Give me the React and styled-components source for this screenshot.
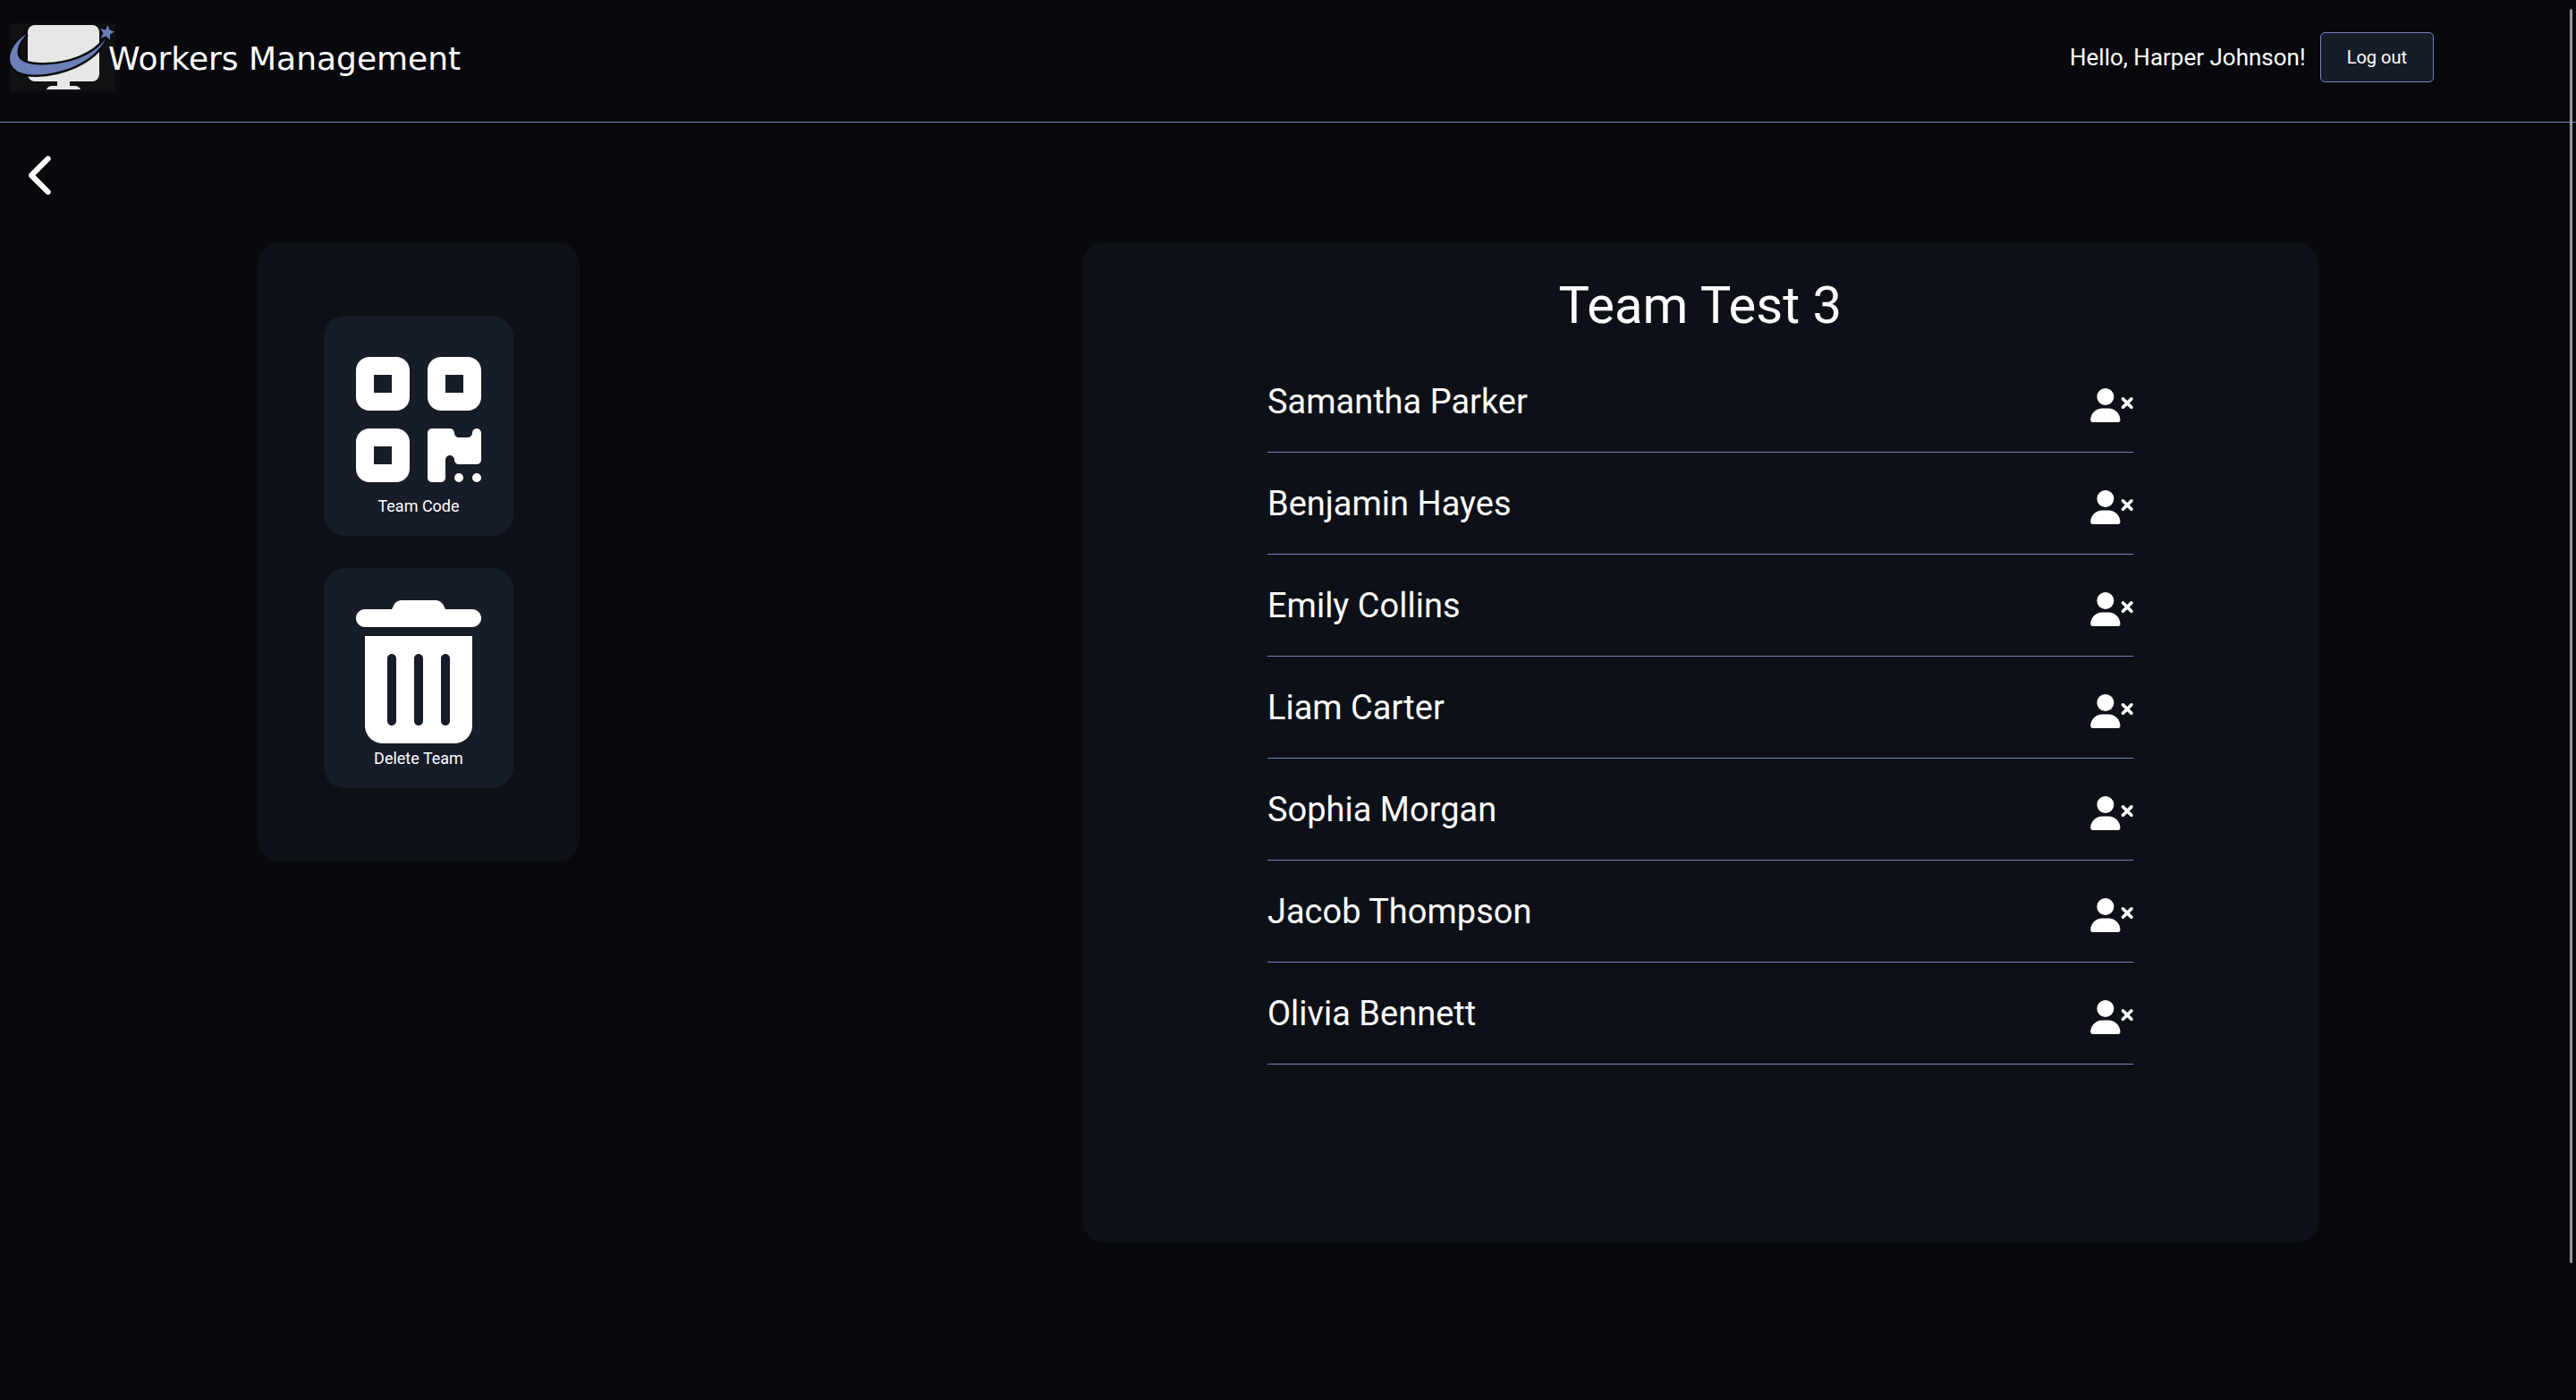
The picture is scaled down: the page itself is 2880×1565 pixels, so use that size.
import React from 'react';
import styled, { createGlobalStyle } from 'styled-components';
import { FaChevronLeft, FaQrcode, FaTrashCan, FaUserXmark } from 'react-icons/fa6';

const colors = {
  page: '#07090d',
  card: '#0d1117',
  tile: '#171c29',
  line: '#7583bd',
  text: '#ffffff',
};

const GlobalStyle = createGlobalStyle`
  * { box-sizing: border-box; }
  body {
    margin: 0;
    min-height: 100vh;
    background: ${colors.page};
    color: ${colors.text};
    font-family: Roboto, "Liberation Sans", sans-serif;
  }
  button { font: inherit; color: inherit; border: 0; background: none; padding: 0; cursor: pointer; }
`;

const Header = styled.header`
  display: flex;
  align-items: center;
  justify-content: space-between;
  height: 137px;
  padding: 0 159px 9px 11px;
  border-bottom: 1px solid ${colors.line};
`;

const Brand = styled.a`
  display: flex;
  align-items: center;
  color: inherit;
  text-decoration: none;
`;

const Logo = styled.svg`
  width: 118px;
  height: 76px;
  margin-right: -8px;
`;

const BrandName = styled.span`
  font-family: "DejaVu Sans", Verdana, sans-serif;
  font-size: 36px;
  line-height: 44px;
  padding-top: 4px;
`;

const Session = styled.div`
  display: flex;
  align-items: center;
  gap: 16px;
`;

const Greeting = styled.span`
  font-size: 26px;
  line-height: 32px;
`;

const LogoutButton = styled.button`
  height: 56px;
  padding: 0 29px;
  font-size: 20px;
  background: ${colors.tile};
  border: 1px solid ${colors.line};
  border-radius: 5px;
`;

const BackButton = styled.button`
  display: flex;
  margin: 34px 0 0 32px;

  svg { width: 31px; height: 50px; }
`;

const Content = styled.main`
  display: flex;
  justify-content: space-between;
  align-items: flex-start;
  width: 80%;
  margin: 50px auto 0;
`;

const Card = styled.section`
  background: ${colors.card};
  border-radius: 24px;
`;

const Actions = styled(Card)`
  display: flex;
  flex-direction: column;
  gap: 36px;
  width: 360px;
  padding: 82px 74px;
`;

const ActionTile = styled.button`
  display: flex;
  flex-direction: column;
  align-items: center;
  gap: 4px;
  padding: 36px 0 20px;
  font-size: 18px;
  line-height: 26px;
  background: ${colors.tile};
  border-radius: 24px;

  svg { font-size: 160px; }
`;

const Team = styled(Card)`
  width: 60%;
  padding: 34px 0 199px;
`;

const TeamName = styled.h1`
  margin: 0;
  font-size: 58px;
  font-weight: 400;
  line-height: 72px;
  text-align: center;
`;

const Members = styled.ul`
  width: 70%;
  margin: 15px auto 0;
  padding: 0;
  list-style: none;
`;

const Member = styled.li`
  display: flex;
  align-items: center;
  justify-content: space-between;
  height: 114px;
  padding-top: 1px;
  border-bottom: 1px solid ${colors.line};
  font-size: 38px;
`;

const RemoveButton = styled.button`
  display: flex;
  padding-top: 8px;

  svg { width: 48px; height: 38px; }
`;

const ScrollThumb = styled.div`
  position: fixed;
  top: 10px;
  right: 4px;
  width: 3px;
  height: 1402px;
  border-radius: 2px;
  background: #98989b;
`;

const members = [
  'Samantha Parker',
  'Benjamin Hayes',
  'Emily Collins',
  'Liam Carter',
  'Sophia Morgan',
  'Jacob Thompson',
  'Olivia Bennett',
];

const swoosh =
  'M19 12C7 19 0 30 0 40C1 53 14 58 30 57.500C55 57 94 45 107 17.500C94 36 66 46 38 46.500C22 47 8 43 8.500 32C9 24 13 18 19 12Z';

function BrandLogo() {
  return (
    <Logo viewBox="0 0 118 76" aria-hidden="true">
      <rect width="118" height="76" fill="#0f1112" />
      <rect x="20" y="2" width="80" height="63" rx="8" fill="#e7e7e7" />
      <path d="M53 63H67V70H74Q78 71 79 74H41Q42 71 46 70H53Z" fill="#e7e7e7" />
      <path d={swoosh} fill="#0b0d11" stroke="#0b0d11" strokeWidth="5" />
      <path d={swoosh} fill="#6d7fb9" />
      <path d="M109.500 2L111.500 7.500L117 9.500L112 12.500L112 18.500L107.500 14.500L102 16.500L104.500 11L101 6L107 7.500Z" fill="#6d7fb9" />
    </Logo>
  );
}

export default function App() {
  return (
    <>
      <GlobalStyle />
      <Header>
        <Brand href="#">
          <BrandLogo />
          <BrandName>Workers Management</BrandName>
        </Brand>
        <Session>
          <Greeting>Hello, Harper Johnson!</Greeting>
          <LogoutButton type="button">Log out</LogoutButton>
        </Session>
      </Header>
      <BackButton type="button" aria-label="Back">
        <FaChevronLeft />
      </BackButton>
      <Content>
        <Actions>
          <ActionTile type="button">
            <FaQrcode />
            Team Code
          </ActionTile>
          <ActionTile type="button">
            <FaTrashCan />
            Delete Team
          </ActionTile>
        </Actions>
        <Team>
          <TeamName>Team Test 3</TeamName>
          <Members>
            {members.map((name) => (
              <Member key={name}>
                {name}
                <RemoveButton type="button" aria-label={`Remove ${name}`}>
                  <FaUserXmark />
                </RemoveButton>
              </Member>
            ))}
          </Members>
        </Team>
      </Content>
      <ScrollThumb />
    </>
  );
}
